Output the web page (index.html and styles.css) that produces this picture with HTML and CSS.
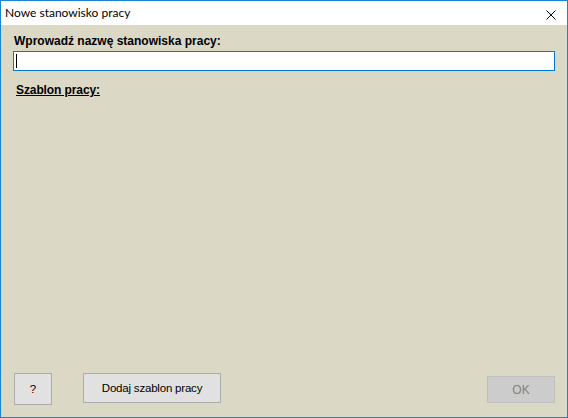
FILE: index.html
```html
<!DOCTYPE html>
<html lang="pl">
<head>
    <meta charset="UTF-8" />
    <title>Nowe stanowisko pracy</title>
    <link rel="stylesheet" href="styles.css">
</head>
<body>
    <div class="window">
        <div class="titlebar">
            <span class="title">Nowe stanowisko pracy</span>
            <svg class="close" width="10" height="10" viewBox="0 0 10 10">
                <path d="M0.5 0.5 L9.5 9.5 M9.5 0.5 L0.5 9.5" stroke="#000" stroke-width="1" />
            </svg>
        </div>
        <div class="content">
            <label class="label" for="name">Wprowadź nazwę stanowiska pracy:</label>
            <div class="input"><span class="caret"></span></div>
            <div class="section">Szablon pracy:</div>
            <div class="spacer"></div>
            <div class="buttons">
                <button class="btn help">?</button>
                <button class="btn add">Dodaj szablon pracy</button>
                <button class="btn ok" disabled>OK</button>
            </div>
        </div>
    </div>
</body>
</html>
```

FILE: styles.css
```css
html, body {
    margin: 0;
    padding: 0;
}

body {
    width: 568px;
    height: 418px;
    overflow: hidden;
}

.window {
    box-sizing: border-box;
    width: 568px;
    height: 418px;
    border: 1px solid #1883d7;
    display: flex;
    flex-direction: column;
    background: #dbd9c6;
}

.titlebar {
    height: 24px;
    background: #fff;
    display: flex;
    align-items: center;
    justify-content: space-between;
    padding: 0 11px 0 4px;
}

.title {
    font-family: Lato, "Noto Sans", sans-serif;
    font-size: 12px;
    color: #000;
    margin-top: -1px;
}

.close {
    display: block;
    margin-top: 3px;
}

.content {
    flex: 1;
    display: flex;
    flex-direction: column;
    padding: 9px 12px 12px 12px;
    font-family: "Liberation Sans", Arial, sans-serif;
    font-size: 11px;
    color: #000;
}

.label {
    font-weight: bold;
    font-size: 12px;
    height: 17px;
    line-height: 15px;
    padding-left: 1px;
}

.input {
    box-sizing: border-box;
    height: 20px;
    width: 542px;
    border: 1px solid #0078d7;
    background: #fff;
    padding: 2px 2px;
}

.caret {
    display: block;
    width: 1px;
    height: 14px;
    background: #000;
}

.section {
    margin-top: 12px;
    margin-left: 3px;
    font-weight: bold;
    font-size: 12px;
    letter-spacing: -0.1px;
    text-decoration: underline;
}

.spacer {
    flex: 1;
}

.buttons {
    display: flex;
    align-items: flex-end;
}

.btn {
    box-sizing: border-box;
    font-family: "Liberation Sans", Arial, sans-serif;
    font-size: 11.5px;
    background: #e1e1e1;
    border: 1px solid #adadad;
    color: #000;
    padding: 0;
}

.help {
    width: 38px;
    height: 32px;
    margin-left: 1px;
}

.add {
    width: 138px;
    height: 30px;
    margin-left: 31px;
    margin-bottom: 2px;
    letter-spacing: -0.2px;
}

.ok {
    width: 68px;
    height: 27px;
    margin-left: auto;
    margin-bottom: 2px;
    background: #cccccc;
    border-color: #bfbfbf;
    color: #838383;
    font-size: 12px;
}
```
